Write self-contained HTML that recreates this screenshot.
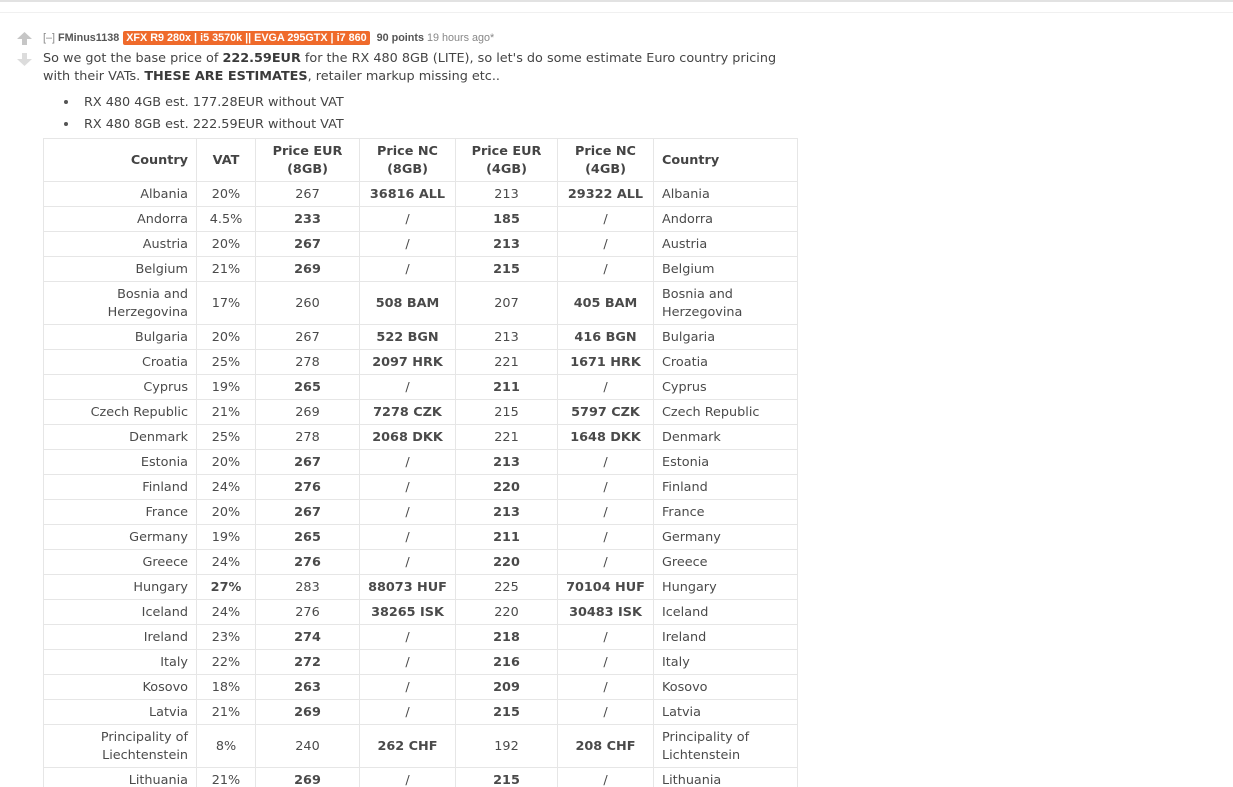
<!DOCTYPE html>
<html><head><meta charset="utf-8"><style>
html,body{margin:0;padding:0;background:#fff;width:1233px;height:787px;overflow:hidden}
body{font-family:"DejaVu Sans",Verdana,sans-serif;color:#4a4a4a;position:relative}
.l1{position:absolute;left:0;top:0;width:1233px;height:2px;background:#e2e2e2}
.l2{position:absolute;left:0;top:12px;width:1233px;height:1px;background:#f0f0f0}
.arr{position:absolute;left:17px}
.tag{position:absolute;left:43px;top:31px;font-family:"Liberation Sans",Arial,sans-serif;font-size:10.8px;color:#888;white-space:nowrap;line-height:14px}
.tag b{color:#555}
.fl{background:#ef6a2b;color:#fff;font-weight:bold;padding:0 3px;margin:0 4px 0 1px;border-radius:2px;display:inline-block;line-height:14px}
.txt{position:absolute;left:43px;top:50px;font-size:12.8px;line-height:18px;width:760px;color:#444}
.txt b{color:#3a3a3a}
ul{position:absolute;left:43px;top:92px;margin:0;padding:0 0 0 41px;font-size:12.8px;line-height:22px;color:#444;list-style:none}
li{position:relative}
li:before{content:"";position:absolute;left:-20px;top:8px;width:4px;height:4px;border-radius:2px;background:#555}
table{position:absolute;left:43px;top:138px;border-collapse:collapse;table-layout:fixed;font-size:12.8px;color:#4a4a4a}
td,th{border:1px solid #e6e6e6;padding:1px 8px 0;text-align:center;line-height:18px;height:23px;white-space:nowrap}
th{height:41px;font-weight:bold;color:#444}
td:first-child,th:first-child{text-align:right}
td:last-child,th:last-child{text-align:left}
tr.d td{height:41px}
</style></head><body>
<div class="l1"></div><div class="l2"></div>
<svg class="arr" style="top:32px" width="15" height="13" viewBox="0 0 15 13"><path d="M7.5 0L15 7H10V13H5V7H0Z" fill="#c6c6c6"/></svg>
<svg class="arr" style="top:53px" width="15" height="13" viewBox="0 0 15 13"><path d="M7.5 13L15 6H10V0H5V6H0Z" fill="#dcdcdc"/></svg>
<div class="tag">[–] <b>FMinus1138</b> <span class="fl">XFX R9 280x | i5 3570k || EVGA 295GTX | i7 860</span> <b>90 points</b> 19 hours ago*</div>
<div class="txt">So we got the base price of <b>222.59EUR</b> for the RX 480 8GB (LITE), so let's do some estimate Euro country pricing<br>with their VATs. <b>THESE ARE ESTIMATES</b>, retailer markup missing etc..</div>
<ul><li>RX 480 4GB est. 177.28EUR without VAT</li><li>RX 480 8GB est. 222.59EUR without VAT</li></ul>
<table>
<colgroup><col style="width:153px"><col style="width:59px"><col style="width:104px"><col style="width:96px"><col style="width:102px"><col style="width:96px"><col style="width:144px"></colgroup>
<tr><th>Country</th><th>VAT</th><th>Price EUR<br>(8GB)</th><th>Price NC<br>(8GB)</th><th>Price EUR<br>(4GB)</th><th>Price NC<br>(4GB)</th><th>Country</th></tr>
<tr><td>Albania</td><td>20%</td><td>267</td><td><b>36816 ALL</b></td><td>213</td><td><b>29322 ALL</b></td><td>Albania</td></tr>
<tr><td>Andorra</td><td>4.5%</td><td><b>233</b></td><td>/</td><td><b>185</b></td><td>/</td><td>Andorra</td></tr>
<tr><td>Austria</td><td>20%</td><td><b>267</b></td><td>/</td><td><b>213</b></td><td>/</td><td>Austria</td></tr>
<tr><td>Belgium</td><td>21%</td><td><b>269</b></td><td>/</td><td><b>215</b></td><td>/</td><td>Belgium</td></tr>
<tr class="d"><td>Bosnia and<br>Herzegovina</td><td>17%</td><td>260</td><td><b>508 BAM</b></td><td>207</td><td><b>405 BAM</b></td><td>Bosnia and<br>Herzegovina</td></tr>
<tr><td>Bulgaria</td><td>20%</td><td>267</td><td><b>522 BGN</b></td><td>213</td><td><b>416 BGN</b></td><td>Bulgaria</td></tr>
<tr><td>Croatia</td><td>25%</td><td>278</td><td><b>2097 HRK</b></td><td>221</td><td><b>1671 HRK</b></td><td>Croatia</td></tr>
<tr><td>Cyprus</td><td>19%</td><td><b>265</b></td><td>/</td><td><b>211</b></td><td>/</td><td>Cyprus</td></tr>
<tr><td>Czech Republic</td><td>21%</td><td>269</td><td><b>7278 CZK</b></td><td>215</td><td><b>5797 CZK</b></td><td>Czech Republic</td></tr>
<tr><td>Denmark</td><td>25%</td><td>278</td><td><b>2068 DKK</b></td><td>221</td><td><b>1648 DKK</b></td><td>Denmark</td></tr>
<tr><td>Estonia</td><td>20%</td><td><b>267</b></td><td>/</td><td><b>213</b></td><td>/</td><td>Estonia</td></tr>
<tr><td>Finland</td><td>24%</td><td><b>276</b></td><td>/</td><td><b>220</b></td><td>/</td><td>Finland</td></tr>
<tr><td>France</td><td>20%</td><td><b>267</b></td><td>/</td><td><b>213</b></td><td>/</td><td>France</td></tr>
<tr><td>Germany</td><td>19%</td><td><b>265</b></td><td>/</td><td><b>211</b></td><td>/</td><td>Germany</td></tr>
<tr><td>Greece</td><td>24%</td><td><b>276</b></td><td>/</td><td><b>220</b></td><td>/</td><td>Greece</td></tr>
<tr><td>Hungary</td><td><b>27%</b></td><td>283</td><td><b>88073 HUF</b></td><td>225</td><td><b>70104 HUF</b></td><td>Hungary</td></tr>
<tr><td>Iceland</td><td>24%</td><td>276</td><td><b>38265 ISK</b></td><td>220</td><td><b>30483 ISK</b></td><td>Iceland</td></tr>
<tr><td>Ireland</td><td>23%</td><td><b>274</b></td><td>/</td><td><b>218</b></td><td>/</td><td>Ireland</td></tr>
<tr><td>Italy</td><td>22%</td><td><b>272</b></td><td>/</td><td><b>216</b></td><td>/</td><td>Italy</td></tr>
<tr><td>Kosovo</td><td>18%</td><td><b>263</b></td><td>/</td><td><b>209</b></td><td>/</td><td>Kosovo</td></tr>
<tr><td>Latvia</td><td>21%</td><td><b>269</b></td><td>/</td><td><b>215</b></td><td>/</td><td>Latvia</td></tr>
<tr class="d"><td>Principality of<br>Liechtenstein</td><td>8%</td><td>240</td><td><b>262 CHF</b></td><td>192</td><td><b>208 CHF</b></td><td>Principality of<br>Lichtenstein</td></tr>
<tr><td>Lithuania</td><td>21%</td><td><b>269</b></td><td>/</td><td><b>215</b></td><td>/</td><td>Lithuania</td></tr>
</table>
</body></html>
